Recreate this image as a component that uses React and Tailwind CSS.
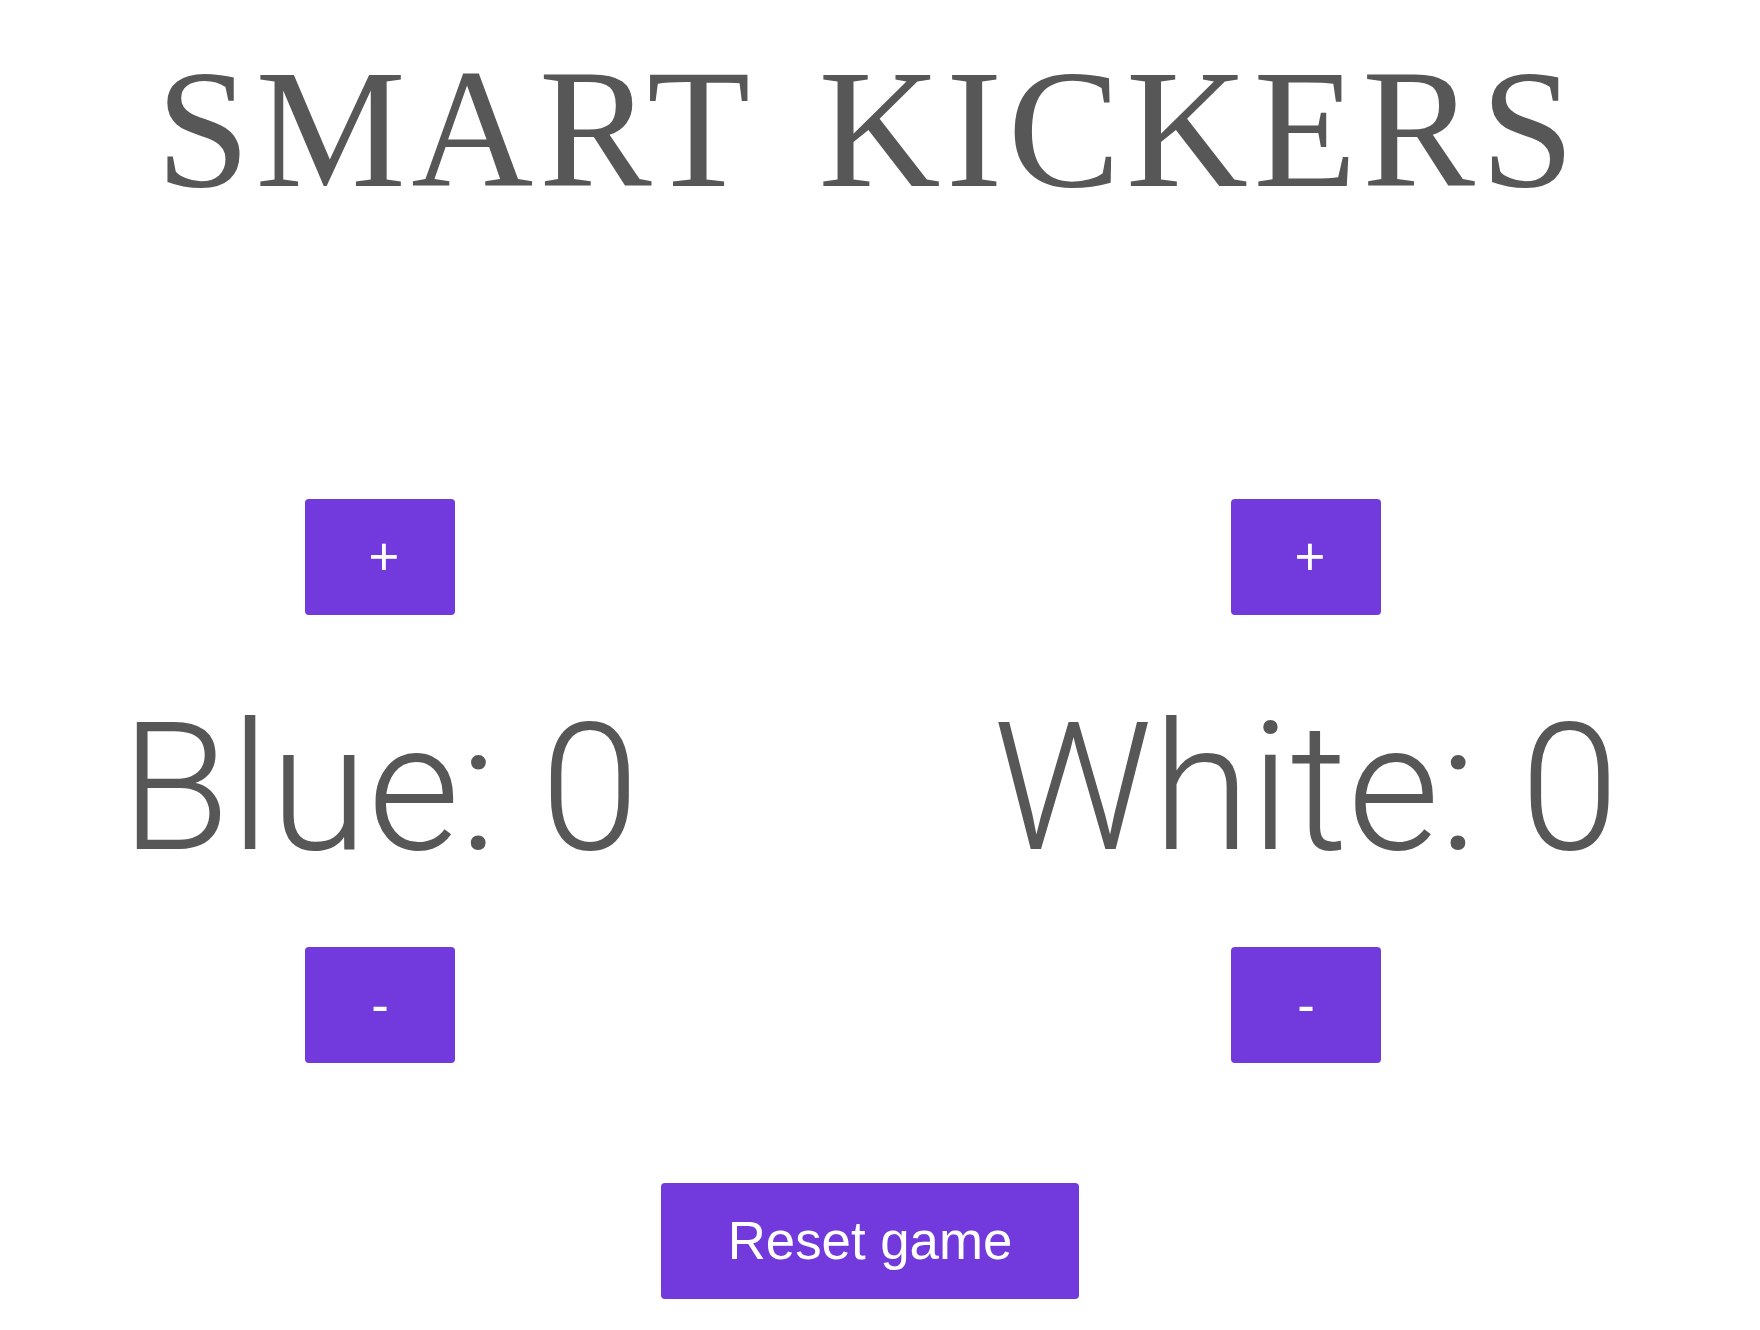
import React, { useState } from "react";

const ScoreColumn = ({ name, score, onPlus, onMinus, className }) => (
  <div className={`flex flex-col items-center ${className}`}>
    <button
      onClick={onPlus}
      className="flex h-[116px] w-[150px] items-center justify-center rounded bg-[#7239dc] pl-2 font-['Liberation_Sans'] text-[52.8px] leading-none text-white"
    >
      +
    </button>
    <div className="mt-[84px] whitespace-nowrap font-['Roboto'] text-[178px] font-light leading-none text-[#575757]">
      {name}: {score}
    </div>
    <button
      onClick={onMinus}
      className="mt-[70px] flex h-[116px] w-[150px] items-center justify-center rounded bg-[#7239dc] font-['Liberation_Sans'] text-[52.8px] leading-none text-white"
    >
      -
    </button>
  </div>
);

const App = () => {
  const [blue, setBlue] = useState(0);
  const [white, setWhite] = useState(0);

  return (
    <div className="flex min-h-screen w-full flex-col items-center bg-white pr-[20px]">
      <div className="mt-[45px] mr-[4px] whitespace-nowrap font-['Liberation_Serif'] text-[169px] leading-none tracking-[5.5px] text-[#575757] [word-spacing:18px]">
        SMART KICKERS
      </div>

      <div className="mt-[285px] flex w-full">
        <ScoreColumn
          name="Blue"
          score={blue}
          onPlus={() => setBlue(blue + 1)}
          onMinus={() => setBlue(Math.max(0, blue - 1))}
          className="ml-[80px] w-[600px]"
        />
        <ScoreColumn
          name="White"
          score={white}
          onPlus={() => setWhite(white + 1)}
          onMinus={() => setWhite(Math.max(0, white - 1))}
          className="ml-[276px] w-[700px]"
        />
      </div>

      <button
        onClick={() => {
          setBlue(0);
          setWhite(0);
        }}
        className="mt-[120px] flex h-[116px] w-[418px] items-center justify-center rounded bg-[#7239dc] font-['Liberation_Sans'] text-[52.8px] leading-none text-white"
      >
        Reset game
      </button>
    </div>
  );
};

export default App;
